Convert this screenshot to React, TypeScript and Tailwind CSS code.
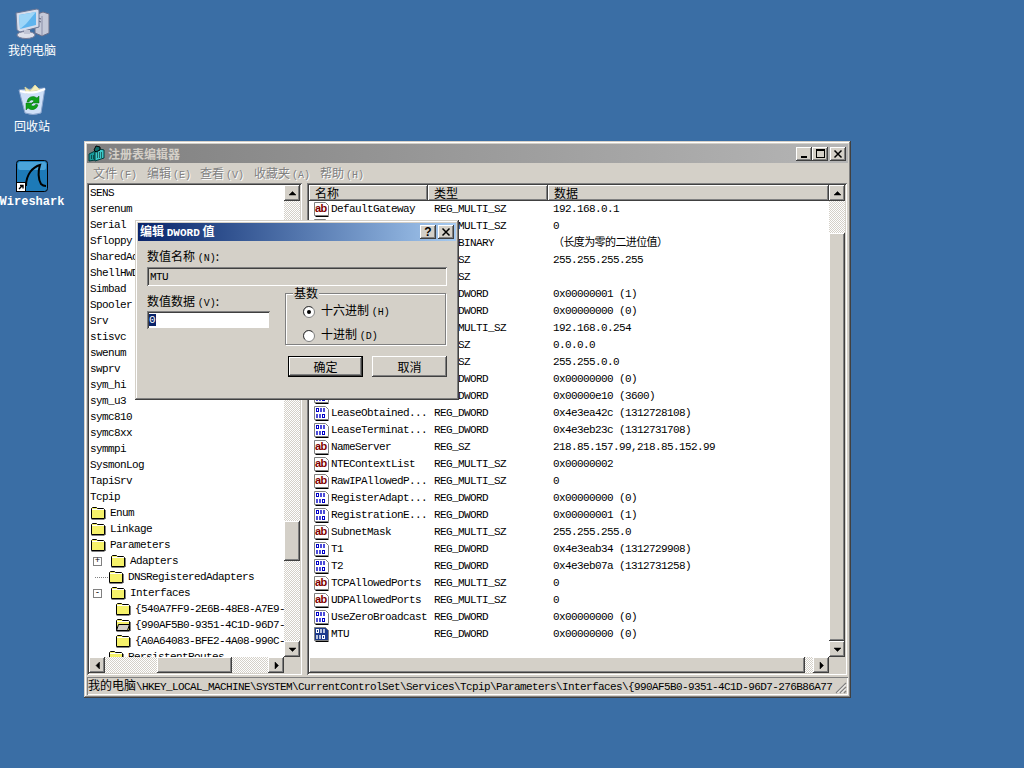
import type { ReactNode } from "react";

const raised = "bg-[#d4d0c8] shadow-[inset_-1px_-1px_#404040,inset_1px_1px_#ffffff,inset_-2px_-2px_#808080]";
const sunken = "shadow-[inset_1px_1px_#808080,inset_-1px_-1px_#ffffff,inset_2px_2px_#404040,inset_-2px_-2px_#d4d0c8]";
const track = "bg-[image:conic-gradient(#ffffff_25%,#d4d0c8_0_50%,#ffffff_0_75%,#d4d0c8_0)] bg-[length:2px_2px]";
const mono = "font-['Liberation_Mono','Noto_Sans_CJK_SC',monospace] text-[11px] tracking-[-0.6px]";

type Kind = "ab" | "bin";

const values: [string, string, string, Kind][] = [
  ["DefaultGateway", "REG_MULTI_SZ", "192.168.0.1", "ab"],
  ["DefaultGatewa...", "REG_MULTI_SZ", "0", "ab"],
  ["DhcpClassIdBin", "REG_BINARY", "（长度为零的二进位值）", "bin"],
  ["DhcpSubnetMask", "REG_SZ", "255.255.255.255", "ab"],
  ["Domain", "REG_SZ", "", "ab"],
  ["EnableDHCP", "REG_DWORD", "0x00000001 (1)", "bin"],
  ["EnableDeadGW", "REG_DWORD", "0x00000000 (0)", "bin"],
  ["IPAddress", "REG_MULTI_SZ", "192.168.0.254", "ab"],
  ["DhcpIPAddress", "REG_SZ", "0.0.0.0", "ab"],
  ["DhcpSubnet", "REG_SZ", "255.255.0.0", "ab"],
  ["IPAutoconfig", "REG_DWORD", "0x00000000 (0)", "bin"],
  ["Lease", "REG_DWORD", "0x00000e10 (3600)", "bin"],
  ["LeaseObtained...", "REG_DWORD", "0x4e3ea42c (1312728108)", "bin"],
  ["LeaseTerminat...", "REG_DWORD", "0x4e3eb23c (1312731708)", "bin"],
  ["NameServer", "REG_SZ", "218.85.157.99,218.85.152.99", "ab"],
  ["NTEContextList", "REG_MULTI_SZ", "0x00000002", "ab"],
  ["RawIPAllowedP...", "REG_MULTI_SZ", "0", "ab"],
  ["RegisterAdapt...", "REG_DWORD", "0x00000000 (0)", "bin"],
  ["RegistrationE...", "REG_DWORD", "0x00000001 (1)", "bin"],
  ["SubnetMask", "REG_MULTI_SZ", "255.255.255.0", "ab"],
  ["T1", "REG_DWORD", "0x4e3eab34 (1312729908)", "bin"],
  ["T2", "REG_DWORD", "0x4e3eb07a (1312731258)", "bin"],
  ["TCPAllowedPorts", "REG_MULTI_SZ", "0", "ab"],
  ["UDPAllowedPorts", "REG_MULTI_SZ", "0", "ab"],
  ["UseZeroBroadcast", "REG_DWORD", "0x00000000 (0)", "bin"],
  ["MTU", "REG_DWORD", "0x00000000 (0)", "bin"],
];

const services = ["SENS", "serenum", "Serial", "Sfloppy", "SharedAccess", "ShellHWDetection", "Simbad", "Spooler", "Srv", "stisvc", "swenum", "swprv", "sym_hi", "sym_u3", "symc810", "symc8xx", "symmpi", "SysmonLog", "TapiSrv", "Tcpip"];

function Folder({ open }: { open?: boolean }) {
  return (
    <svg width="16" height="14" viewBox="0 0 16 14" className="shrink-0">
      <path d="M1.5 12.5V2.5l1-1h4l1 1h6l1 1v9z" fill="#f6f26a" stroke="#000" />
      <path d="M14.5 13.5h-13M15.5 4v9" stroke="#808080" />
      <path d="M2 3.5h12" stroke="#fff" />
      {open && <path d="M1.5 12.5l2-6h11l-2 6z" fill="#d4d0c8" stroke="#000" />}
    </svg>
  );
}

function RegIcon({ kind, selected }: { kind: Kind; selected?: boolean }) {
  const blue = selected ? "#ffffff" : "#0000c8";
  return (
    <svg width="17" height="17" viewBox="0 0 17 17" className="shrink-0">
      <path d="M1.5 1.5h11l3 3v10h-14z" fill={selected ? "#1c3a8c" : "#fff"} stroke="#808080" />
      <path d="M2.5 15.5h13" stroke="#000" />
      {kind === "ab" ? (
        <text x="2" y="11" fontSize="11" fontWeight="700" fontFamily="Liberation Sans" fill="#800000">ab</text>
      ) : (
        <g fill="none" stroke={blue}>
          <rect x="3.5" y="3.5" width="2" height="3" />
          <path d="M8 3v4M11 3v4" strokeWidth="1.4" />
          <path d="M4 9v4M7 9v4" strokeWidth="1.4" />
          <rect x="9.5" y="9.5" width="2" height="3" />
        </g>
      )}
    </svg>
  );
}

function Arrow({ dir }: { dir: "up" | "down" | "left" | "right" }) {
  const d = { up: "M4 9h7L7.5 5.5z", down: "M4 6h7L7.5 9.5z", left: "M9.5 4v7L6 7.5z", right: "M6 4v7l3.5-3.5z" }[dir];
  return (
    <svg width="15" height="15" viewBox="0 0 15 15">
      <path d={d} fill="#000" stroke="#000" strokeWidth="0.5" />
    </svg>
  );
}

function ScrollBtn({ dir }: { dir: "up" | "down" | "left" | "right" }) {
  return (
    <div className={`${raised} w-[16px] h-[16px] flex items-center justify-center shrink-0`}>
      <Arrow dir={dir} />
    </div>
  );
}

function CaptionBtn({ children }: { children: ReactNode }) {
  return <div className={`${raised} w-[16px] h-[14px] flex items-center justify-center`}>{children}</div>;
}

function DeskIcon({ label, children, mono: m }: { label: string; children: ReactNode; mono?: boolean }) {
  return (
    <div className="w-[64px] h-[76px] flex flex-col items-center">
      <div className="h-[34px] flex items-end">{children}</div>
      <span className={`mt-[3px] text-white text-[12px] leading-[14px] whitespace-nowrap ${m ? "font-['Liberation_Mono',monospace] text-[10px] font-bold" : "font-['Noto_Sans_CJK_SC',sans-serif]"}`}>
        {label}
      </span>
    </div>
  );
}

function TreeRow({ indent, icon, open, box, children, line }: { indent: string; icon?: boolean; open?: boolean; box?: string; children: ReactNode; line?: string }) {
  return (
    <div className={`h-[16px] flex items-center whitespace-nowrap ${indent}`}>
      {box && (
        <span className="w-[9px] h-[9px] mr-[8px] ml-[3px] border border-[#808080] bg-white flex items-center justify-center text-[9px] leading-[7px] font-['Liberation_Mono',monospace] tracking-normal">
          {box}
        </span>
      )}
      {line && <span className={`border-t border-dotted border-[#808080] ${line}`} />}
      {icon && <Folder open={open} />}
      <span className="ml-[4px]">{children}</span>
    </div>
  );
}

function TreePane() {
  return (
    <div className={`${sunken} w-[215px] p-[2px] flex flex-col shrink-0`}>
      <div className="flex flex-1 min-h-0">
        <div className={`flex-1 min-w-0 overflow-hidden bg-white ${mono} text-black leading-[16px] pl-[1px]`}>
          {services.map((s) => (
            <div key={s} className="h-[16px] whitespace-nowrap">{s}</div>
          ))}
          <TreeRow indent="pl-0" icon>Enum</TreeRow>
          <TreeRow indent="pl-0" icon>Linkage</TreeRow>
          <TreeRow indent="pl-0" icon>Parameters</TreeRow>
          <TreeRow indent="pl-0" icon box="+">Adapters</TreeRow>
          <TreeRow indent="pl-[5px]" icon line="w-[13px]">DNSRegisteredAdapters</TreeRow>
          <TreeRow indent="pl-0" icon box="-">Interfaces</TreeRow>
          <TreeRow indent="pl-[25px]" icon line="w-[10px]">{"{540A7FF9-2E6B-48E8-A7E9-0123"}</TreeRow>
          <TreeRow indent="pl-[25px]" icon open line="w-[10px]">{"{990AF5B0-9351-4C1D-96D7-276B"}</TreeRow>
          <TreeRow indent="pl-[25px]" icon line="w-[10px]">{"{A0A64083-BFE2-4A08-990C-7761"}</TreeRow>
          <TreeRow indent="pl-[18px]" icon>PersistentRoutes</TreeRow>
        </div>
        <div className="w-[16px] flex flex-col shrink-0">
          <ScrollBtn dir="up" />
          <div className={`${track} flex-1 flex flex-col`}>
            <div className="h-[320px]" />
            <div className={`${raised} h-[40px]`} />
          </div>
          <ScrollBtn dir="down" />
        </div>
      </div>
      <div className="h-[16px] flex shrink-0">
        <ScrollBtn dir="left" />
        <div className={`${track} flex-1 flex`}>
          <div className="w-[52px]" />
          <div className={`${raised} w-[75px]`} />
        </div>
        <ScrollBtn dir="right" />
        <div className="w-[16px] bg-[#d4d0c8]" />
      </div>
    </div>
  );
}

function HeaderCell({ width, label }: { width: string; label: string }) {
  return (
    <div className={`${raised} ${width} h-full flex items-center pl-[6px] text-[12px] font-['Noto_Sans_CJK_SC',sans-serif]`}>
      {label}
    </div>
  );
}

function ValuePane() {
  return (
    <div className={`${sunken} flex-1 min-w-0 p-[2px] flex flex-col`}>
      <div className="flex flex-1 min-h-0">
        <div className="flex-1 min-w-0 bg-white flex flex-col overflow-hidden">
          <div className="h-[16px] flex shrink-0">
            <HeaderCell width="w-[119px]" label="名称" />
            <HeaderCell width="w-[120px]" label="类型" />
            <HeaderCell width="flex-1" label="数据" />
          </div>
          <div className={`${mono} text-black`}>
            {values.map(([name, type, data, kind]) => (
              <div key={name} className="h-[17px] flex items-center pl-[4px] whitespace-nowrap">
                <div className="w-[115px] flex items-center gap-[1px]">
                  <RegIcon kind={kind} selected={name === "MTU"} />
                  <span>{name}</span>
                </div>
                <div className="w-[120px] pl-[6px]">{type}</div>
                <div className="pl-[5px] [&]:tracking-[-0.6px]">{data}</div>
              </div>
            ))}
          </div>
        </div>
        <div className="w-[16px] flex flex-col shrink-0">
          <ScrollBtn dir="up" />
          <div className={`${track} flex-1 flex flex-col`}>
            <div className="h-[32px]" />
            <div className={`${raised} flex-1`} />
          </div>
          <ScrollBtn dir="down" />
        </div>
      </div>
      <div className="h-[16px] flex shrink-0">
        <div className={`${raised} flex-1 ml-[0px]`} />
        <div className={`${track} w-[8px]`} />
        <ScrollBtn dir="right" />
        <div className="w-[16px] bg-[#d4d0c8]" />
      </div>
    </div>
  );
}

function MenuItem({ text, hot, width }: { text: string; hot: string; width: string }) {
  return (
    <span className={`${width} text-[#808080] [text-shadow:1px_1px_0_#ffffff] text-[12px] font-['Noto_Sans_CJK_SC',sans-serif] whitespace-nowrap`}>
      {text}<span className="font-['Liberation_Mono',monospace] text-[10px] ml-[2px]">({hot})</span>
    </span>
  );
}

function RegEditIcon() {
  return (
    <svg width="17" height="17" viewBox="0 0 17 17" className="shrink-0">
      <path d="M1 9l6-3v9l-6 1z" fill="#1b9c9c" stroke="#003c3c" />
      <path d="M7 7l5-3 4 1v8l-9 3z" fill="#3cc8c8" stroke="#003c3c" />
      <path d="M8 1l4 1v3l-4 2-2-2z" fill="#0c6a6a" stroke="#000" />
      <path d="M3 11h3M3 13h3M9 8h5M9 10h5M9 12h5" stroke="#000" strokeDasharray="1 1" />
    </svg>
  );
}

function RegWindow() {
  return (
    <div className="absolute left-[84px] top-[141px] w-[767px] h-[557px] p-[3px] flex flex-col bg-[#d4d0c8] shadow-[inset_-1px_-1px_#404040,inset_1px_1px_#d4d0c8,inset_-2px_-2px_#808080,inset_2px_2px_#ffffff]">
      <div className="h-[19px] bg-gradient-to-r from-[#808080] to-[#b5b5b5] flex items-center pl-[1px] pr-[2px] shrink-0">
        <RegEditIcon />
        <span className="ml-[3px] text-[12px] font-bold text-[#d4d0c8] font-['Noto_Sans_CJK_SC',sans-serif]">注册表编辑器</span>
        <div className="ml-auto flex items-center">
          <CaptionBtn>
            <span className="w-[6px] h-[2px] bg-black mt-[6px] -ml-[1px]" />
          </CaptionBtn>
          <CaptionBtn>
            <span className="w-[9px] h-[9px] border border-black border-t-2" />
          </CaptionBtn>
          <div className="ml-[2px]">
            <CaptionBtn>
              <svg width="10" height="10" viewBox="0 0 10 10"><path d="M1.5 1.5l7 7M8.5 1.5l-7 7" stroke="#000" strokeWidth="1.5" /></svg>
            </CaptionBtn>
          </div>
        </div>
      </div>
      <div className="h-[20px] flex items-center pl-[6px] shrink-0">
        <MenuItem text="文件" hot="F" width="w-[54px]" />
        <MenuItem text="编辑" hot="E" width="w-[53px]" />
        <MenuItem text="查看" hot="V" width="w-[54px]" />
        <MenuItem text="收藏夹" hot="A" width="w-[66px]" />
        <MenuItem text="帮助" hot="H" width="w-[54px]" />
      </div>
      <div className="h-[492px] flex gap-[5px] shrink-0 pr-[1px]">
        <TreePane />
        <ValuePane />
      </div>
      <div className="h-[19px] mt-[2px] flex items-center relative shadow-[inset_1px_1px_#808080,inset_-1px_-1px_#ffffff] pl-[1px] overflow-hidden">
        <span className={`${mono} whitespace-nowrap`}>
          <span className="font-['Noto_Sans_CJK_SC',sans-serif] text-[12px] tracking-normal">我的电脑</span>
          {"\\HKEY_LOCAL_MACHINE\\SYSTEM\\CurrentControlSet\\Services\\Tcpip\\Parameters\\Interfaces\\{990AF5B0-9351-4C1D-96D7-276B86A77"}
        </span>
        <svg width="13" height="13" viewBox="0 0 13 13" className="absolute right-[1px] bottom-[1px]">
          <path d="M12 2L2 12M12 6l-6 6M12 10l-2 2" stroke="#808080" strokeWidth="1.2" />
          <path d="M12 3.5L3.5 12M12 7.5L7.5 12" stroke="#fff" />
        </svg>
      </div>
    </div>
  );
}

function Radio({ checked }: { checked?: boolean }) {
  return (
    <svg width="12" height="12" viewBox="0 0 12 12" className="shrink-0">
      <circle cx="6" cy="6" r="5.5" fill="#fff" stroke="#808080" />
      <path d="M2 9.5A5 5 0 0 1 9.5 2" fill="none" stroke="#404040" />
      {checked && <circle cx="6" cy="6" r="2" fill="#000" />}
    </svg>
  );
}

function DialogButton({ label, primary }: { label: string; primary?: boolean }) {
  return (
    <div className={`${primary ? "outline outline-1 -outline-offset-1 outline-black" : ""} w-[75px] h-[21px]`}>
      <div className={`${raised} ${primary ? "m-[1px] h-[19px]" : "h-[21px]"} flex items-center justify-center text-[12px]`}>{label}</div>
    </div>
  );
}

function DwordDialog() {
  const cjk = "font-['Noto_Sans_CJK_SC',sans-serif] text-[12px] leading-[14px] text-black";
  const hot = "font-['Liberation_Mono',monospace] text-[10px]";
  return (
    <div className={`absolute left-[135px] top-[220px] w-[324px] h-[180px] p-[3px] flex flex-col bg-[#d4d0c8] shadow-[inset_-1px_-1px_#404040,inset_1px_1px_#d4d0c8,inset_-2px_-2px_#808080,inset_2px_2px_#ffffff] ${cjk}`}>
      <div className="h-[18px] bg-gradient-to-r from-[#0a246a] to-[#a6caf0] flex items-center pl-[2px] pr-[2px] shrink-0">
        <span className="text-white font-bold text-[12px]">编辑 <span className="font-['Liberation_Mono',monospace] text-[11px]">DWORD</span> 值</span>
        <div className="ml-auto flex gap-[2px]">
          <CaptionBtn><span className="font-bold text-[12px] leading-[12px] font-['Liberation_Sans',sans-serif]">?</span></CaptionBtn>
          <CaptionBtn>
            <svg width="10" height="10" viewBox="0 0 10 10"><path d="M1.5 1.5l7 7M8.5 1.5l-7 7" stroke="#000" strokeWidth="1.5" /></svg>
          </CaptionBtn>
        </div>
      </div>
      <div className="flex-1 flex flex-col pl-[9px] pr-[9px] pt-[8px]">
        <div className="h-[14px]">数值名称 <span className={hot}>(N)</span>:</div>
        <div className={`mt-[4px] h-[19px] w-[300px] flex items-center pl-[3px] ${mono} shadow-[inset_1px_1px_#808080,inset_-1px_-1px_#ffffff,inset_2px_2px_#404040]`}>MTU</div>
        <div className="mt-[7px] flex items-start">
          <div className="w-[138px]">
            <div className="h-[14px] mt-[1px]">数值数据 <span className={hot}>(V)</span>:</div>
            <div className="mt-[3px] h-[18px] w-[123px] bg-white flex items-center pl-[2px] shadow-[inset_1px_1px_#808080,inset_-1px_-1px_#d4d0c8,inset_2px_2px_#404040]">
              <span className={`${mono} bg-[#0a246a] text-white w-[7px] h-[12px] leading-[12px]`}>0</span>
            </div>
          </div>
          <div className="relative w-[161px] h-[52px] border border-[#808080] shadow-[1px_1px_#ffffff,inset_1px_1px_#ffffff] flex flex-col pl-[17px] pt-[9px] gap-[7px]">
            <span className="absolute -top-[8px] left-[7px] bg-[#d4d0c8] px-[1px]">基数</span>
            <div className="flex items-center gap-[6px]"><Radio checked /><span>十六进制 <span className={hot}>(H)</span></span></div>
            <div className="flex items-center gap-[6px]"><Radio /><span>十进制 <span className={hot}>(D)</span></span></div>
          </div>
        </div>
        <div className="mt-[11px] flex justify-end gap-[9px]">
          <DialogButton label="确定" primary />
          <DialogButton label="取消" />
        </div>
      </div>
    </div>
  );
}

function ComputerIcon() {
  return (
    <svg width="36" height="32" viewBox="0 0 36 32">
      <path d="M21 7l8-3 6 2v19l-7 3-7-3z" fill="#c4c8d8" stroke="#6a6e88" />
      <path d="M28 8v20" stroke="#8a8ea8" />
      <path d="M22 9l5 2M22 12l5 2" stroke="#5a5e78" />
      <path d="M2 5l21-4 2 1v17L6 24l-3-2z" fill="#d4dcec" stroke="#6a7694" />
      <path d="M5 7l17-3v13L6 21z" fill="#5eb4ee" />
      <path d="M5 7l17-3-10 12-6 5z" fill="#9ed6f8" />
      <ellipse cx="12" cy="27" rx="9" ry="3.5" fill="#dde0ea" stroke="#7a7e98" />
      <path d="M10 22h6v4h-6z" fill="#c0c4d4" />
    </svg>
  );
}

function BinIcon() {
  return (
    <svg width="30" height="32" viewBox="0 0 30 32">
      <path d="M2 6l26-2-4 25q-8 3-16 0z" fill="#cfe0f8" stroke="#8aa4cc" />
      <path d="M8 3l5 4 5-6 5 5-14 3z" fill="#f4eebc" stroke="#d8d4a0" />
      <path d="M3 7q12 4 25-2" fill="none" stroke="#fff" strokeWidth="2" />
      <path d="M10 18a6 6 0 0 1 10-4l2-2v7h-7l2-2a3 3 0 0 0-5 1zM21 21a6 6 0 0 1-10 3l-2 2v-7h7l-2 2a3 3 0 0 0 5-1z" fill="#10a018" stroke="#087010" strokeWidth="0.5" />
    </svg>
  );
}

function WiresharkIcon() {
  return (
    <svg width="32" height="32" viewBox="0 0 32 32">
      <rect x="0.5" y="0.5" width="31" height="31" rx="3" fill="#1d7ab8" stroke="#000" />
      <rect x="2" y="2" width="28" height="8" rx="2" fill="#4ba3d8" />
      <path d="M10 26C10 14 17 7 24 5c-2 6-2 14 1 19 1 1 3 2 5 2" fill="none" stroke="#000" strokeWidth="2" />
      <rect x="0.5" y="22.5" width="9" height="9" fill="#fff" stroke="#000" />
      <path d="M3 29l3-3M4 25.5h3v3" fill="none" stroke="#000" strokeWidth="1.4" />
    </svg>
  );
}

export default function App() {
  return (
    <div className="relative w-[1024px] h-[768px] overflow-hidden bg-[#3a6ea5] font-['Noto_Sans_CJK_SC',sans-serif]">
      <div className="pt-[6px] flex flex-col">
        <DeskIcon label="我的电脑"><ComputerIcon /></DeskIcon>
        <DeskIcon label="回收站"><BinIcon /></DeskIcon>
        <DeskIcon label="Wireshark" mono><WiresharkIcon /></DeskIcon>
      </div>
      <RegWindow />
      <DwordDialog />
    </div>
  );
}
